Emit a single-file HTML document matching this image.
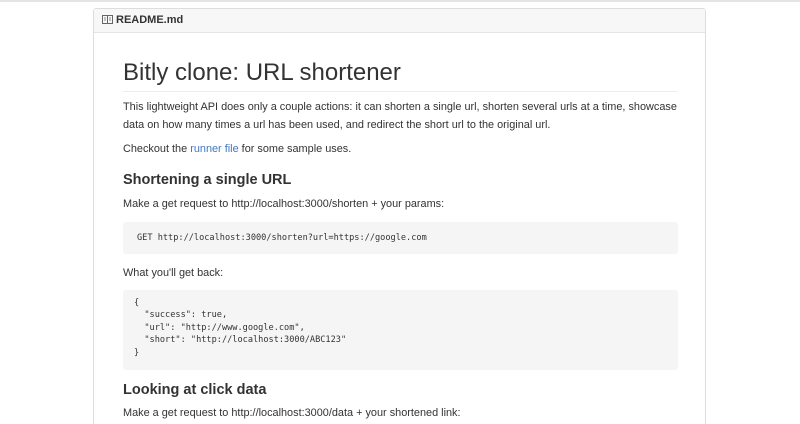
<!DOCTYPE html>
<html style="overflow:hidden;height:424px"><head><style>
body{margin:0;width:800px;height:424px;overflow:hidden;background:#fff;font-family:"Liberation Sans",sans-serif;color:#333;position:relative}
.top{position:absolute;left:0;right:0;top:0;height:2px;background:#e4e4e4}
.box{position:absolute;left:93px;top:8px;width:613px;height:416px;border:1px solid #ddd;border-bottom:none;border-radius:3px 3px 0 0;box-sizing:border-box}
.hdr{height:23px;background:#f7f7f7;border-bottom:1px solid #e5e5e5;font-size:11px;font-weight:bold;line-height:23px;padding-left:8px;color:#333}
.a{position:absolute;left:123px;width:555px;font-size:10.9px;line-height:18px;white-space:nowrap}
h1{position:absolute;left:123px;top:58px;width:555px;margin:0;font-size:24px;font-weight:normal;line-height:30px;padding-bottom:3px;border-bottom:1px solid #eee;color:#333}
.h3{font-size:14.5px;font-weight:bold}
.code{position:absolute;left:123px;width:555px;background:#f5f5f5;border-radius:3px;font-family:"DejaVu Sans Mono",monospace;font-size:8.6px;color:#333;white-space:pre;box-sizing:border-box;padding-left:11px}
a{color:#4078c0;text-decoration:none}
</style></head><body>
<div class="top"></div>
<div class="box"><div class="hdr"><svg width="11" height="9" viewBox="0 0 11 9" style="vertical-align:-1px;margin-right:3px"><rect x="0.5" y="0.5" width="10" height="8" fill="none" stroke="#666"/><line x1="5.5" y1="1" x2="5.5" y2="8" stroke="#666"/><path d="M2 3h2M2 5h2M7 3h2M7 5h2" stroke="#888"/></svg>README.md</div></div>
<h1>Bitly clone: URL shortener</h1>
<div class="a" style="top:98px">This lightweight API does only a couple actions: it can shorten a single url, shorten several urls at a time, showcase<br>data on how many times a url has been used, and redirect the short url to the original url.</div>
<div class="a" style="top:140px">Checkout the <a>runner file</a> for some sample uses.</div>
<div class="a h3" style="top:171px">Shortening a single URL</div>
<div class="a" style="top:195px">Make a get request to http://localhost:3000/shorten + your params:</div>
<div class="code" style="top:222px;height:32px;line-height:32px;padding-left:14px">GET http://localhost:3000/shorten?url=https://google.com</div>
<div class="a" style="top:264px">What you'll get back:</div>
<div class="code" style="top:290px;height:80px;line-height:12.4px;padding-top:7px">{
  "success": true,
  "url": "http://www.google.com",
  "short": "http://localhost:3000/ABC123"
}</div>
<div class="a h3" style="top:381px">Looking at click data</div>
<div class="a" style="top:404px;line-height:18px;height:20px;overflow:hidden">Make a get request to http://localhost:3000/data + your shortened link:</div>
</body></html>
